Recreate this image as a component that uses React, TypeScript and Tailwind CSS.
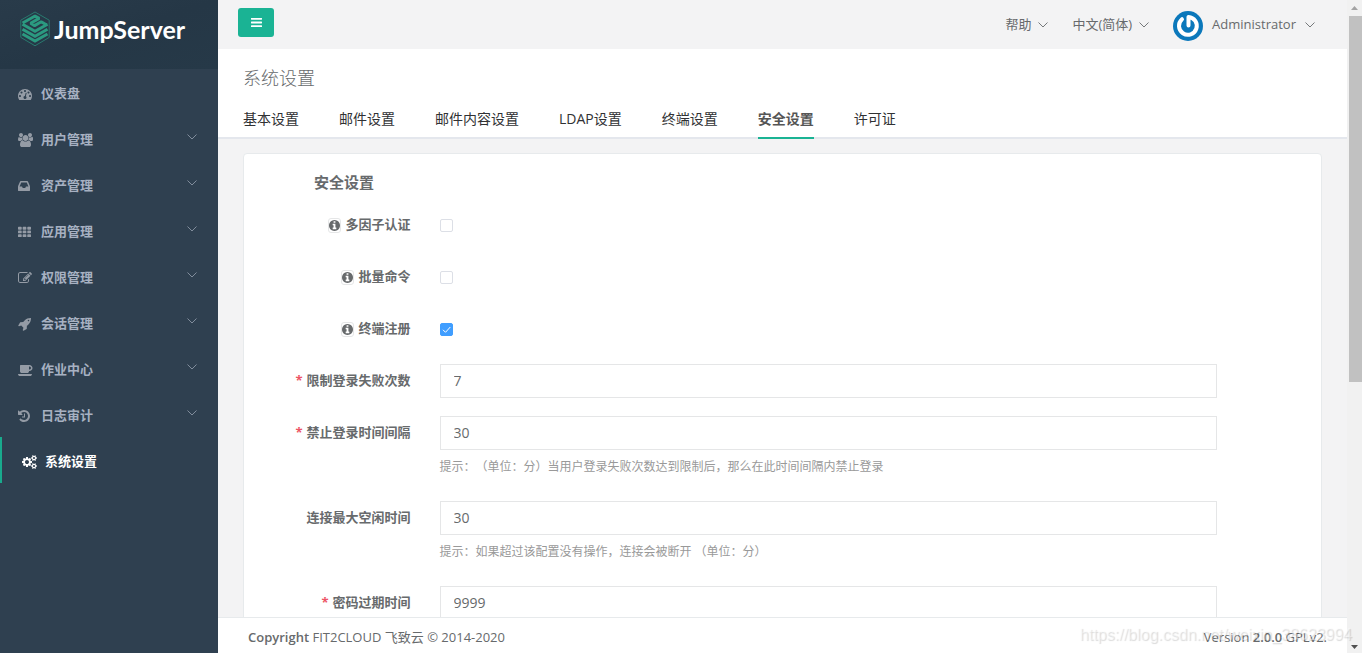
import { useState } from "react";
import type { ReactNode } from "react";

const icons = {
  dashboard:
    "M384 1152q0-53-37.5-90.5t-90.5-37.5-90.5 37.5-37.5 90.5 37.5 90.5 90.5 37.5 90.5-37.5 37.5-90.5zm192-448q0-53-37.5-90.5t-90.5-37.5-90.5 37.5-37.5 90.5 37.5 90.5 90.5 37.5 90.5-37.5 37.5-90.5zm428 481l101-382q6-26-7.5-48.5t-38.5-29.5-48 6.5-30 39.5l-101 382q-60 5-107 43.5t-63 98.5q-20 77 20 146t117 89 146-20 89-117q16-60-6-117t-72-91zm660-33q0-53-37.5-90.5t-90.5-37.5-90.5 37.5-37.5 90.5 37.5 90.5 90.5 37.5 90.5-37.5 37.5-90.5zm-640-640q0-53-37.5-90.5t-90.5-37.5-90.5 37.5-37.5 90.5 37.5 90.5 90.5 37.5 90.5-37.5 37.5-90.5zm448 192q0-53-37.5-90.5t-90.5-37.5-90.5 37.5-37.5 90.5 37.5 90.5 90.5 37.5 90.5-37.5 37.5-90.5zm320 448q0 261-141 483-19 29-54 29h-1402q-35 0-54-29-141-221-141-483 0-182 71-348t191-286 286-191 348-71 348 71 286 191 191 286 71 348z",
  users:
    "M593 896q-162 5-265 128h-134q-82 0-138-40.5t-56-118.5q0-353 124-353 6 0 43.5 21t97.5 42.5 119 21.5q67 0 133-23-5 37-5 66 0 159 93 293zm1071 637q0 120-73 189.5t-194 69.5h-874q-121 0-194-69.5t-73-189.5q0-53 3.5-103.5t14-109 26.5-108.5 43-97.5 62-81 85.5-53.5 111.5-20q10 0 43 21.5t73 48 107 48 135 21.5 135-21.5 107-48 73-48 43-21.5q61 0 111.5 20t85.5 53.5 62 81 43 97.5 26.5 108.5 14 109 3.5 103.5zm-1024-1277q0 106-75 181t-181 75-181-75-75-181 75-181 181-75 181 75 75 181zm704 384q0 159-112.5 271.5t-271.5 112.5-271.5-112.5-112.5-271.5 112.5-271.5 271.5-112.5 271.5 112.5 112.5 271.5zm576 225q0 78-56 118.5t-138 40.5h-134q-103-123-265-128 93-134 93-293 0-29-5-66 66 23 133 23 59 0 119-21.5t97.5-42.5 43.5-21q124 0 124 353zm-128-609q0 106-75 181t-181 75-181-75-75-181 75-181 181-75 181 75 75 181z",
  inbox:
    "M1151 960h316q-1-3-2.5-8.5t-2.5-7.5l-212-496h-708l-212 496q-1 3-2.5 8.5t-2.5 7.5h316l95 192h320zm513 30v482q0 26-19 45t-45 19h-1408q-26 0-45-19t-19-45v-482q0-62 25-123l238-552q10-25 36.5-42t52.5-17h832q26 0 52.5 17t36.5 42l238 552q25 61 25 123z",
  grid: "M96 256h320q96 0 96 96v192q0 96-96 96h-320q-96 0-96-96v-192q0-96 96-96zM736 256h320q96 0 96 96v192q0 96-96 96h-320q-96 0-96-96v-192q0-96 96-96zM1376 256h320q96 0 96 96v192q0 96-96 96h-320q-96 0-96-96v-192q0-96 96-96zM96 768h320q96 0 96 96v192q0 96-96 96h-320q-96 0-96-96v-192q0-96 96-96zM736 768h320q96 0 96 96v192q0 96-96 96h-320q-96 0-96-96v-192q0-96 96-96zM1376 768h320q96 0 96 96v192q0 96-96 96h-320q-96 0-96-96v-192q0-96 96-96zM96 1280h320q96 0 96 96v192q0 96-96 96h-320q-96 0-96-96v-192q0-96 96-96zM736 1280h320q96 0 96 96v192q0 96-96 96h-320q-96 0-96-96v-192q0-96 96-96zM1376 1280h320q96 0 96 96v192q0 96-96 96h-320q-96 0-96-96v-192q0-96 96-96z",
  edit: "M888 1184l116-116-152-152-116 116v56h96v96h56zm440-720q-16-16-33 1l-350 350q-17 17-1 33t33-1l350-350q17-17 1-33zm80 594v190q0 119-84.5 203.5t-203.5 84.5h-832q-119 0-203.5-84.5t-84.5-203.5v-832q0-119 84.5-203.5t203.5-84.5h832q63 0 117 25 15 7 18 23 3 17-9 29l-49 49q-14 14-32 8-23-6-45-6h-832q-66 0-113 47t-47 113v832q0 66 47 113t113 47h832q66 0 113-47t47-113v-126q0-13 9-22l64-64q15-15 35-7t20 29zm-96-738l288 288-672 672h-288v-288zm444 132l-92 92-288-288 92-92q28-28 68-28t68 28l152 152q28 28 28 68t-28 68z",
  rocket:
    "M1440 448q0-40-28-68t-68-28-68 28-28 68 28 68 68 28 68-28 28-68zm224-288q0 249-75.5 430.5t-253.5 360.5q-81 80-195 176l-20 379q-2 16-16 26l-384 224q-7 4-16 4-12 0-23-9l-64-64q-13-14-8-32l85-276-281-281-276 85q-3 1-9 1-14 0-23-9l-64-64q-17-19-5-39l224-384q10-14 26-16l379-20q96-114 176-195 188-187 358-258t431-71q14 0 24 9.5t10 22.5z",
  coffee:
    "M1664 640q0-80-56-136t-136-56h-64v384h64q80 0 136-56t56-136zm-1664 768h1792q0 106-75 181t-181 75h-1280q-106 0-181-75t-75-181zm1856-768q0 159-112.5 271.5t-271.5 112.5h-64v32q0 92-66 158t-158 66h-704q-92 0-158-66t-66-158v-736q0-26 19-45t45-19h1152q159 0 271.5 112.5t112.5 271.5z",
  history:
    "M1664 896q0 156-61 298t-164 245-245 164-298 61q-172 0-327-72.5t-264-204.5q-7-10-6.5-22.5t8.5-20.5l137-138q10-9 25-9 16 2 23 12 73 95 179 147t225 52q104 0 198.5-40.5t163.5-109.5 109.5-163.5 40.5-198.5-40.5-198.5-109.5-163.5-163.5-109.5-198.5-40.5q-98 0-188 35.5t-160 101.5l137 138q31 30 14 69-17 40-59 40h-448q-26 0-45-19t-19-45v-448q0-42 40-59 39-17 69 14l130 129q107-101 244.5-156.5t284.5-55.5q156 0 298 61t245 164 164 245 61 298zm-640-288v448q0 14-9 23t-23 9h-320q-14 0-23-9t-9-23v-64q0-14 9-23t23-9h224v-352q0-14 9-23t23-9h64q14 0 23 9t9 23z",
  cogs: "M896 896q0-106-75-181t-181-75-181 75-75 181 75 181 181 75 181-75 75-181zm768 512q0-52-38-90t-90-38-90 38-38 90q0 53 37.5 90.5t90.5 37.5 90.5-37.5 37.5-90.5zm0-1024q0-52-38-90t-90-38-90 38-38 90q0 53 37.5 90.5t90.5 37.5 90.5-37.5 37.5-90.5zm-384 421v185q0 10-7 19.5t-16 10.5l-155 24q-11 35-32 76 34 48 90 115 7 11 7 20 0 12-7 19-23 30-82.5 89.5t-78.5 59.5q-11 0-21-7l-115-90q-37 19-77 31-11 108-23 155-7 24-30 24h-186q-11 0-20-7.5t-10-17.5l-23-153q-34-10-75-31l-118 89q-7 7-20 7-11 0-21-8-144-133-144-160 0-9 7-19 10-14 41-53t47-61q-23-44-35-82l-152-24q-10-1-17-9.5t-7-19.5v-185q0-10 7-19.5t16-10.5l155-24q11-35 32-76-34-48-90-115-7-11-7-20 0-12 7-20 22-30 82-89t79-59q11 0 21 7l115 90q34-18 77-32 11-108 23-154 7-24 30-24h186q11 0 20 7.5t10 17.5l23 153q34 10 75 31l118-89q8-7 20-7 11 0 21 8 144 133 144 160 0 8-7 19-12 16-42 54t-45 60q23 48 34 82l152 23q10 2 17 10.5t7 19.5zm640 533v140q0 16-149 31-12 27-30 52 51 113 51 138 0 4-4 7-122 71-124 71-8 0-46-47t-52-68q-20 2-30 2t-30-2q-14 21-52 68t-46 47q-2 0-124-71-4-3-4-7 0-25 51-138-18-25-30-52-149-15-149-31v-140q0-16 149-31 13-29 30-52-51-113-51-138 0-4 4-7 4-2 35-20t59-34 30-16q8 0 46 46.5t52 67.5q20-2 30-2t30 2q51-71 92-112l6-2q4 0 124 70 4 3 4 7 0 25-51 138 17 23 30 52 149 15 149 31zm0-1024v140q0 16-149 31-12 27-30 52 51 113 51 138 0 4-4 7-122 71-124 71-8 0-46-47t-52-68q-20 2-30 2t-30-2q-14 21-52 68t-46 47q-2 0-124-71-4-3-4-7 0-25 51-138-18-25-30-52-149-15-149-31v-140q0-16 149-31 13-29 30-52-51-113-51-138 0-4 4-7 4-2 35-20t59-34 30-16q8 0 46 46.5t52 67.5q20-2 30-2t30 2q51-71 92-112l6-2q4 0 124 70 4 3 4 7 0 25-51 138 17 23 30 52 149 15 149 31z",
  info: "M1152 1376v-160q0-14-9-23t-23-9h-96v-512q0-14-9-23t-23-9h-320q-14 0-23 9t-9 23v160q0 14 9 23t23 9h96v320h-96q-14 0-23 9t-9 23v160q0 14 9 23t23 9h448q14 0 23-9t9-23zm-128-896v-160q0-14-9-23t-23-9h-192q-14 0-23 9t-9 23v160q0 14 9 23t23 9h192q14 0 23-9t9-23zm640 416q0 209-103 385.5t-279.5 279.5-385.5 103-385.5-103-279.5-279.5-103-385.5 103-385.5 279.5-279.5 385.5-103 385.5 103 279.5 279.5 103 385.5z",
  bars: "M1664 1344v128q0 26-19 45t-45 19h-1408q-26 0-45-19t-19-45v-128q0-26 19-45t45-19h1408q26 0 45 19t19 45zm0-512v128q0 26-19 45t-45 19h-1408q-26 0-45-19t-19-45v-128q0-26 19-45t45-19h1408q26 0 45 19t19 45zm0-512v128q0 26-19 45t-45 19h-1408q-26 0-45-19t-19-45v-128q0-26 19-45t45-19h1408q26 0 45 19t19 45z",
};

// viewBox and width for narrow, regular and wide glyphs
const shapes = {
  narrow: { box: "128 0 1536 1792", size: "h-[14px] w-[12px]" },
  regular: { box: "0 0 1792 1792", size: "h-[14px] w-[14px]" },
  wide: { box: "0 0 1920 1792", size: "h-[14px] w-[15px]" },
  small: { box: "128 0 1536 1792", size: "h-[13px] w-[11px]" },
  grid: { box: "0 0 1792 1792", size: "h-[13px] w-[13px]" },
};

function Icon({ d, shape = "regular" }: { d: string; shape?: keyof typeof shapes }) {
  return (
    <svg
      viewBox={shapes[shape].box}
      fill="currentColor"
      aria-hidden="true"
      className={`shrink-0 ${shapes[shape].size}`}
    >
      <path d={d} />
    </svg>
  );
}

type MenuItem = {
  text: string;
  icon: string;
  shape?: keyof typeof shapes;
  arrow?: boolean;
  active?: boolean;
};

const menu: MenuItem[] = [
  { text: "仪表盘", icon: icons.dashboard },
  { text: "用户管理", icon: icons.users, shape: "wide", arrow: true },
  { text: "资产管理", icon: icons.inbox, shape: "narrow", arrow: true },
  { text: "应用管理", icon: icons.grid, shape: "grid", arrow: true },
  { text: "权限管理", icon: icons.edit, arrow: true },
  { text: "会话管理", icon: icons.rocket, arrow: true },
  { text: "作业中心", icon: icons.coffee, shape: "wide", arrow: true },
  { text: "日志审计", icon: icons.history, shape: "narrow", arrow: true },
  { text: "系统设置", icon: icons.cogs, shape: "wide", active: true },
];

const tabs = [
  "基本设置",
  "邮件设置",
  "邮件内容设置",
  "LDAP设置",
  "终端设置",
  "安全设置",
  "许可证",
];

function Chevron({ className = "" }: { className?: string }) {
  return (
    <svg
      viewBox="0 0 10 6"
      fill="none"
      stroke="currentColor"
      strokeWidth=".9"
      aria-hidden="true"
      className={`h-[6px] w-[10px] shrink-0 ${className}`}
    >
      <path d="M.5.5 5 5 9.5.5" />
    </svg>
  );
}

function Logo() {
  return (
    <svg viewBox="0 0 30 36" aria-hidden="true" className="h-9 w-[30px] shrink-0">
      <path
        d="M15 1 29.2 9.2v17.2L15 34.8.8 26.4V9.2z"
        fill="none"
        stroke="#2a8a78"
        strokeWidth=".8"
      />
      <g fill="none" stroke="#2b9a80" strokeWidth="3">
        <path d="M2.600 12 15 5l4.200 2.400-8.600 4.900 4 2.300 6.600-3.800 5.600 3.200" strokeLinejoin="bevel" />
        <path d="M2.500 13.200 15 20.200l12.500-7" />
        <path d="M2.500 18.200 15 25.200l12.500-7" />
        <path d="M2.500 23 15 30l12.500-7" />
      </g>
    </svg>
  );
}

function Sidebar() {
  return (
    <aside className="flex w-[218px] shrink-0 flex-col bg-[#2f4050]">
      <a
        href="#"
        className="flex h-[69px] items-start gap-1 bg-linear-to-br from-[#293b4a] via-[#253746] to-[#263948] pt-[11px] pl-5 text-white"
      >
        <Logo />
        <span className="font-[Lato,sans-serif] text-[25px] leading-9 font-bold">JumpServer</span>
      </a>
      <nav>
        {menu.map((item) => (
          <a
            key={item.text}
            href="#"
            className={`flex h-[46px] items-center pt-1 text-[13px] font-bold ${
              item.active
                ? "border-l-2 border-[#19aa8d] pl-5 text-white"
                : "pl-[18px] text-[#a7b1c2]"
            }`}
          >
            <span className={`w-[23px] pb-px ${item.active ? "" : "text-[#949ba5]"}`}>
              <Icon d={item.icon} shape={item.shape} />
            </span>
            {item.text}
            {item.arrow && <Chevron className="mr-[21px] mb-1.5 ml-auto text-[#8b96a5]" />}
          </a>
        ))}
      </nav>
    </aside>
  );
}

function Avatar() {
  return (
    <svg viewBox="0 0 30 30" aria-hidden="true" className="mt-[3px] h-[30px] w-[30px]">
      <circle cx="15" cy="15" r="15" fill="#0b78bb" />
      <path
        d="M9 8.200A8.900 8.900 0 1 0 15.500 6v8.500"
        fill="none"
        stroke="#fff"
        strokeWidth="4"
        strokeLinecap="round"
        strokeLinejoin="round"
      />
    </svg>
  );
}

function TopBar() {
  return (
    <header className="flex h-[49px] shrink-0 items-center justify-between bg-[#f3f3f4] pr-8 pl-5">
      <button
        type="button"
        aria-label="菜单"
        className="mb-1 flex h-[29px] w-9 items-center justify-center rounded-[3px] bg-[#1ab394] text-white"
      >
        <Icon d={icons.bars} shape="small" />
      </button>
      <div className="flex items-center gap-6">
        <button type="button" className="flex items-center gap-[7px]">
          帮助 <Chevron />
        </button>
        <button type="button" className="flex items-center gap-[7px]">
          中文(简体) <Chevron />
        </button>
        <button type="button" className="flex items-center gap-[9px]">
          <Avatar />
          Administrator
          <Chevron />
        </button>
      </div>
    </header>
  );
}

function Row({
  label,
  id,
  info,
  required,
  children,
}: {
  label: string;
  id: string;
  info?: boolean;
  required?: boolean;
  children: ReactNode;
}) {
  return (
    <div className="mb-[18px] grid grid-cols-12">
      <label
        htmlFor={id}
        className="col-span-2 flex h-[34px] items-center justify-end gap-1 pr-[13px] font-bold whitespace-nowrap"
      >
        {required && <span className="text-[#ed5565]">*</span>}
        {info && (
          <span className="rounded-[3px] border border-[#e5e6e7]">
            <Icon d={icons.info} shape="small" />
          </span>
        )}
        {label}
      </label>
      <div className="col-span-9 pr-[14px] pl-4">{children}</div>
    </div>
  );
}

function CheckRow({ label, id, checked = false }: { label: string; id: string; checked?: boolean }) {
  const [on, setOn] = useState(checked);
  return (
    <Row label={label} id={id} info>
      <div className="relative flex h-[34px] items-center">
        <input
          id={id}
          type="checkbox"
          checked={on}
          onChange={() => setOn(!on)}
          className="h-[13px] w-[13px] appearance-none rounded-[2px] border border-[#dcdfe6] bg-white checked:border-[#409eff] checked:bg-[#409eff]"
        />
        {on && (
          <svg
            viewBox="0 0 13 13"
            fill="none"
            stroke="#fff"
            aria-hidden="true"
            className="pointer-events-none absolute left-0 h-[13px] w-[13px]"
          >
            <path d="m3 6.800 2.500 2.500L10.300 4" />
          </svg>
        )}
      </div>
    </Row>
  );
}

function InputRow({
  label,
  id,
  value,
  required,
  help,
}: {
  label: string;
  id: string;
  value: string;
  required?: boolean;
  help?: string;
}) {
  return (
    <Row label={label} id={id} required={required}>
      <input
        id={id}
        type="text"
        defaultValue={value}
        className="block h-[34px] w-full border border-[#e5e6e7] bg-white px-[13px] pb-[2px] text-sm"
      />
      {help && (
        <p className="pt-[5px] pb-1 text-xs leading-6 text-[#999] [text-spacing-trim:space-all]">
          {help}
        </p>
      )}
    </Row>
  );
}

function ScrollBar() {
  return (
    <div aria-hidden="true" className="flex w-[15px] shrink-0 flex-col items-center bg-[#f1f1f1]">
      <svg viewBox="0 0 15 16" className="h-4 w-[15px]">
        <path d="M4 10 7.500 6 11 10z" fill="#a3a3a3" />
      </svg>
      <div className="h-[56%] w-[13px] self-end bg-[#c1c1c1]" />
      <svg viewBox="0 0 15 16" className="mt-auto h-4 w-[15px]">
        <path d="M4 8 7.500 12 11 8z" fill="#505050" />
      </svg>
    </div>
  );
}

export default function App() {
  return (
    <div className="relative flex h-screen overflow-hidden bg-[#f3f3f4] font-['Open_Sans','Noto_Sans_CJK_SC',sans-serif] text-[13px] text-[#676a6c]">
      <Sidebar />

      <div className="flex min-w-0 flex-1 flex-col">
        <TopBar />

        <section className="shrink-0 border-b-2 border-[#e4e7ed] bg-white px-[25px]">
          <h2 className="pt-[17px] text-lg leading-6 font-light">系统设置</h2>
          <nav className="-mb-[2px] flex gap-10 pt-2 text-sm text-[#303133]">
            {tabs.map((tab) => (
              <a
                key={tab}
                href="#"
                className={`h-[41px] border-b-2 pt-px leading-10 ${
                  tab === "安全设置"
                    ? "border-[#1ab394] font-bold text-[#555]"
                    : "border-transparent"
                }`}
              >
                {tab}
              </a>
            ))}
          </nav>
        </section>

        <main className="min-h-0 flex-1 overflow-hidden px-[25px] pt-[14px]">
          <form className="rounded-[4px] border border-[#e7eaec] bg-white pt-[18px]">
            <h3 className="mb-4 pl-[70px] text-[15px] leading-5 font-semibold">安全设置</h3>
            <CheckRow label="多因子认证" id="mfa" />
            <CheckRow label="批量命令" id="batch" />
            <CheckRow label="终端注册" id="register" checked />
            <InputRow label="限制登录失败次数" id="limit" value="7" required />
            <InputRow
              label="禁止登录时间间隔"
              id="interval"
              value="30"
              required
              help="提示：（单位：分）当用户登录失败次数达到限制后，那么在此时间间隔内禁止登录"
            />
            <InputRow
              label="连接最大空闲时间"
              id="idle"
              value="30"
              help="提示：如果超过该配置没有操作，连接会被断开 （单位：分）"
            />
            <InputRow label="密码过期时间" id="expire" value="9999" required />
          </form>
        </main>

        <footer className="flex h-9 shrink-0 items-center justify-between border-t border-[#e7eaec] bg-white pt-1 pr-5 pl-[30px]">
          <p>
            <strong className="font-semibold">Copyright</strong> FIT2CLOUD 飞致云 © 2014-2020
          </p>
          <p>
            Version <strong className="font-semibold">2.0.0</strong> GPLv2.
          </p>
        </footer>
      </div>

      <ScrollBar />

      <p className="pointer-events-none absolute right-[10px] bottom-[6px] font-['Liberation_Sans',sans-serif] text-base text-white/40 [text-shadow:1px_1px_1px_rgb(0_0_0/0.15)]">
        https://blog.csdn.net/weixin_38623994
      </p>
    </div>
  );
}
